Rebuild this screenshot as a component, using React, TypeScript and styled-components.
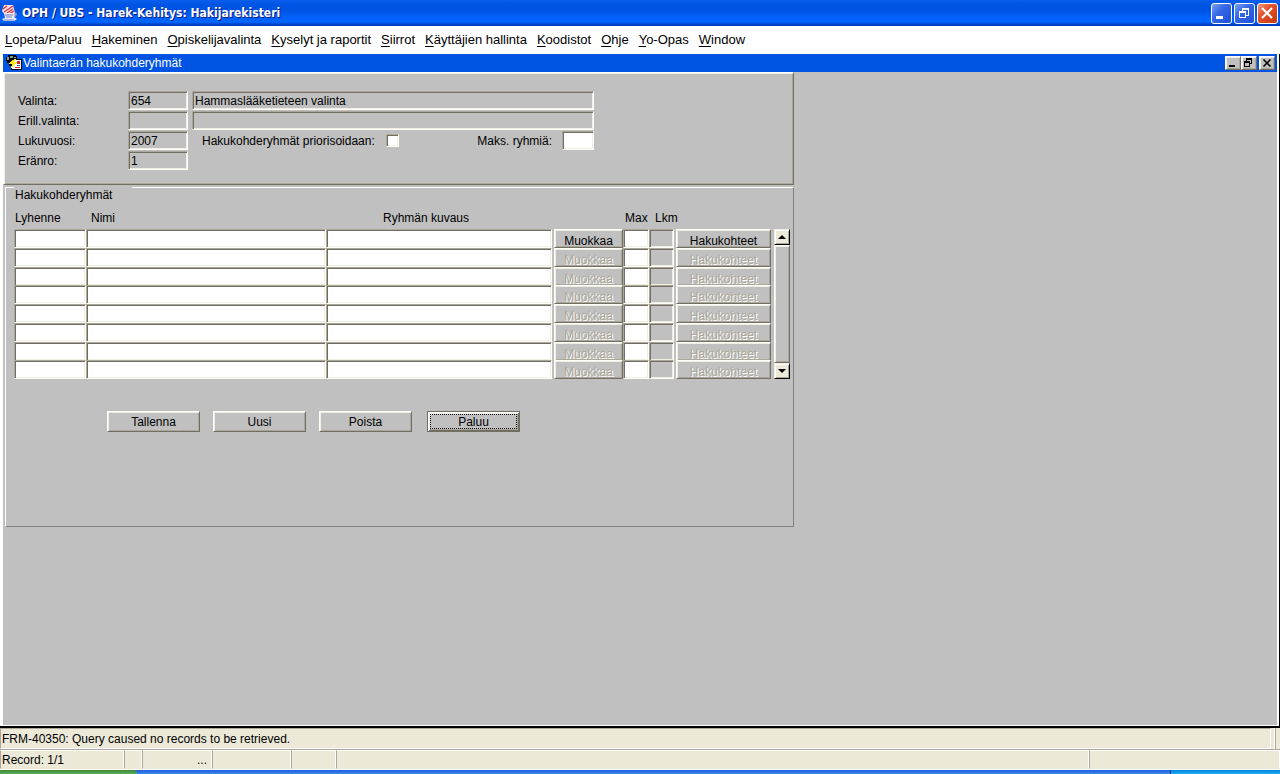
import React from 'react';
import styled, { createGlobalStyle, css } from 'styled-components';

const Global = createGlobalStyle`
  * { box-sizing: border-box; }
  body { margin: 0; background: #fff; }
  body, button, input, table { font-family: "Liberation Sans", Arial, sans-serif; font-size: 12px; line-height: 16px; color: #000; }
`;

const Page = styled.div`
  display: flex;
  flex-direction: column;
  min-height: 100vh;
`;

const sunken = css`
  border: 1px solid;
  border-color: #aca899 #fff #fff #aca899;
  box-shadow: inset 1px 1px #716f64, inset -1px -1px #f1efe2;
`;

const raised = css`
  border: 1px solid;
  border-color: #fff #716f64 #716f64 #fff;
  box-shadow: inset 1px 1px #f1efe2, inset -1px -1px #aca899;
`;

const TitleBar = styled.header`
  display: flex;
  align-items: center;
  height: 26px;
  padding: 0 2px 0 1px;
  gap: 4px;
  background: linear-gradient(#0a5fee 0, #0055e5 4px, #0053e1 10px, #0060fb 17px, #0066ff 22px, #0048d0 24px, #0037b8 26px);
`;

const WindowTitle = styled.h1`
  flex: 1;
  margin: 0;
  font: bold 12px/16px "DejaVu Sans Condensed", "Open Sans", sans-serif;
  color: #fff;
  text-shadow: 1px 1px #0a1883;
`;

const CaptionButtons = styled.div`
  display: flex;
  gap: 2px;
`;

const CaptionButton = styled.button<{ $close?: boolean }>`
  display: block;
  width: 21px;
  height: 21px;
  padding: 0;
  border: 1px solid #fff;
  border-radius: 3px;
  background: ${(p) => (p.$close
    ? 'linear-gradient(135deg, #f0987c, #e2502b 40%, #c83a10)'
    : 'linear-gradient(135deg, #7ba0f3, #3568e6 40%, #1d50da)')};
  svg { display: block; }
`;

const MenuBar = styled.nav`
  display: flex;
  height: 28px;
  padding: 6px 5px 0;
  gap: 10px;
  font-size: 13px;
  background: #fff;
`;

const MenuLink = styled.a`
  color: #000;
  text-decoration: none;
  white-space: nowrap;
  u { text-underline-offset: 2px; }
`;

const Mdi = styled.main`
  flex: 1;
  display: flex;
  flex-direction: column;
  padding-left: 3px;
  border-right: 1px solid #000;
  border-bottom: 2px solid #000;
`;

const Child = styled.section`
  flex: 1;
  display: flex;
  flex-direction: column;
  background: #c0c0c0;
  border-right: 2px solid #fff;
  border-bottom: 1px solid #fff;
`;

const ChildTitleBar = styled.div`
  display: flex;
  align-items: center;
  height: 18px;
  padding: 0 2px 0 3px;
  gap: 1px;
  background: #0054e3;
`;

const ChildTitle = styled.h2`
  flex: 1;
  margin: 0;
  font-size: 12px;
  font-weight: normal;
  color: #fff;
`;

const ChildButtons = styled.div`
  display: flex;
  button:last-child { margin-left: 2px; }
`;

const ChildButton = styled.button`
  ${raised}
  width: 16px;
  height: 14px;
  padding: 0;
  background: #c0c0c0;
  svg { display: block; }
`;

const Form = styled.form`
  display: flex;
  flex-direction: column;
  width: 100%;
  max-width: 791px;
`;

const Panel = styled.div`
  ${raised}
  height: 113px;
  padding: 18px 0 0 14px;
`;

const FieldGrid = styled.div`
  display: grid;
  grid-template-columns: 106px 60px 402px;
  grid-auto-rows: 20px;
  column-gap: 4px;
  label { white-space: nowrap; line-height: 20px; }
`;

const Inline = styled.div`
  display: flex;
  padding-left: 10px;
  label:last-of-type { margin: 0 10px 0 auto; }
`;

const TextField = styled.input<{ $editable?: boolean }>`
  ${sunken}
  width: ${(p) => (p.$editable ? '32px' : '100%')};
  height: 19px;
  padding: 0 2px;
  border-radius: 0;
  background: ${(p) => (p.$editable ? '#fff' : '#c0c0c0')};
  outline: none;
`;

const Tick = styled.input`
  ${sunken}
  appearance: none;
  width: 13px;
  height: 13px;
  margin: 3px 0 0 11px;
  background: #fff;
`;

const Group = styled.fieldset`
  height: 355px;
  margin: -13px 0 0 2px;
  padding: 5px 0 0 8px;
  min-width: 0;
  border: 1px solid;
  border-color: #fff #808080 #808080 #fff;
`;

const Legend = styled.legend`
  height: 30px;
  width: 118px;
  padding: 16px 0 0 1px;
  line-height: 14px;
`;

const GridArea = styled.div`
  display: flex;
  align-items: flex-end;
  gap: 3px;
`;

const Records = styled.table`
  width: 757px;
  height: 172px;
  table-layout: fixed;
  border-collapse: collapse;
  td { padding: 0; vertical-align: top; }
`;

const HeadCell = styled.th<{ $indent: number }>`
  padding: 3px 0 3px ${(p) => p.$indent}px;
  height: 22px;
  font-weight: normal;
  text-align: left;
  white-space: nowrap;
`;

const Cell = styled.input<{ $readOnly?: boolean }>`
  ${sunken}
  display: block;
  width: 100%;
  height: 19px;
  margin: 0 0 -1px;
  padding: 0 2px;
  border-radius: 0;
  background: ${(p) => (p.$readOnly ? '#c0c0c0' : '#fff')};
  outline: none;
`;

const RowButton = styled.button`
  ${raised}
  display: block;
  width: calc(100% - 2px);
  height: 19px;
  margin: 0 0 -1px 2px;
  padding: 4px 0 0;
  line-height: 14px;
  overflow: hidden;
  background: #c0c0c0;
  &:disabled { color: #aca899; text-shadow: 1px 1px #fff; }
`;

const ScrollBar = styled.div`
  display: flex;
  flex-direction: column;
  width: 16px;
  height: 150px;
`;

const ScrollButton = styled.button`
  width: 16px;
  height: 16px;
  padding: 0;
  border: 1px solid;
  border-color: #f1efe2 #000 #000 #f1efe2;
  box-shadow: inset 1px 1px #fff, inset -1px -1px #aca899;
  background: #ece9d8;
  svg { display: block; }
`;

const Thumb = styled.div`
  ${raised}
  flex: 1;
  background: #c0c0c0;
`;

const Actions = styled.div`
  display: flex;
  gap: 13px;
  margin: 32px 0 0 93px;
  button:last-child { margin-left: 2px; }
`;

const ActionButton = styled.button<{ $focused?: boolean }>`
  ${raised}
  width: 93px;
  height: 21px;
  padding: 2px 0 0;
  line-height: 15px;
  background: #c0c0c0;
  ${(p) => p.$focused && css`
    border-color: #716f64;
    box-shadow: inset 1px 1px #fff, inset -1px -1px #716f64, inset 2px 2px #f1efe2, inset -2px -2px #aca899;
    outline: 1px dotted #000;
    outline-offset: -4px;
  `}
`;

const StatusArea = styled.footer`
  background: #ece9d8;
  border-bottom: 1px solid #fff;
`;

const MessageRow = styled.div`
  display: flex;
  gap: 3px;
`;

const Message = styled.div`
  flex: 1;
  height: 21px;
  padding: 2px 1px 0;
  border: 1px solid;
  border-color: #aca899 #fff #fff #aca899;
`;

const Grip = styled.div`
  width: 6px;
  border-left: 1px solid #fff;
  box-shadow: inset 1px 0 #aca899;
`;

const StatusRow = styled.div`
  display: flex;
  height: 20px;
  border-top: 1px solid #aca899;
`;

const StatusCell = styled.div<{ $width?: number; $right?: boolean }>`
  ${(p) => (p.$width ? `flex: none; width: ${p.$width}px;` : 'flex: 1;')}
  padding: 1px 4px 0 1px;
  border: 1px solid;
  border-color: #fff #fff #ece9d8 #aca899;
  text-align: ${(p) => (p.$right ? 'right' : 'left')};
`;

const TaskBar = styled.div`
  display: flex;
  height: 4px;
  background: linear-gradient(#1f5fd6, #3b85ee);
`;

const StartEdge = styled.div`
  width: 137px;
  border-radius: 0 4px 0 0;
  background: linear-gradient(#3d8b3d, #5eac56);
`;

const TrayEdge = styled.div`
  width: 110px;
  margin-left: auto;
  border-left: 1px solid #0a3a8c;
  background: linear-gradient(#0c7fd8, #18b2f2);
`;

const JavaCup = () => (
  <svg width="17" height="18" viewBox="0 0 17 18" aria-hidden="true">
    <path d="M3 1h9l2 8-3 2H4L1 7z" fill="#fbe3e6" />
    <path d="M2 5l4-3M3 8l9-6M6 9l6-4M8 10l5-3" fill="none" stroke="#e0303c" strokeWidth="1.300" />
    <path d="M3 9h10c3-1 4 3 0 4l3 2-3 2H3l-2-2 3-1z" fill="#eeeef8" />
    <path d="M4 11h8M5 13h6M3 16h10M13 10h2v2h-2" fill="none" stroke="#7077b8" />
  </svg>
);

const FormsIcon = () => (
  <svg width="16" height="16" viewBox="0 0 16 16" shapeRendering="crispEdges" aria-hidden="true">
    <path d="M2 0h8v1h1v3h5v11H5v-4H3V8H1V6H0V2h2z" fill="#000" />
    <path d="M1 2h2v3H1zM4 1h3v2H4zM8 2h2v1H8z" fill="#7c9c98" />
    <path d="M6 5h9v9H6z" fill="#fff" />
    <path d="M11 6h3v3h-3z" fill="#d8202c" />
    <path d="M11 10h3v1h-3z" fill="#2350c8" />
    <path d="M9 12h5v1H9z" fill="#d8202c" />
    <path d="M8 4h2v1H9v1H8v1h3v1h-1v1H9v1H8v1H7v1H6v1H5v-2h1V9H3V8h1V7h1V6h1V5h2z" fill="#ffe820" />
  </svg>
);

const menu = ['Lopeta/Paluu', 'Hakeminen', 'Opiskelijavalinta', 'Kyselyt ja raportit', 'Siirrot', 'Käyttäjien hallinta', 'Koodistot', 'Ohje', 'Yo-Opas', 'Window'];

const columns = [
  { title: 'Lyhenne', width: 72, indent: 1 },
  { title: 'Nimi', width: 240, indent: 5 },
  { title: 'Ryhmän kuvaus', width: 226, indent: 57 },
  { title: '', width: 71, indent: 0 },
  { title: 'Max', width: 26, indent: 2 },
  { title: 'Lkm', width: 25, indent: 6 },
  { title: '', width: 97, indent: 0 },
];

const rows = [0, 1, 2, 3, 4, 5, 6, 7];

export default function App() {
  return (
    <Page>
      <Global />
      <TitleBar>
        <JavaCup />
        <WindowTitle>OPH / UBS - Harek-Kehitys: Hakijarekisteri</WindowTitle>
        <CaptionButtons>
          <CaptionButton aria-label="Minimize">
            <svg width="19" height="19"><path d="M4 12h7v3H4z" fill="#fff" /></svg>
          </CaptionButton>
          <CaptionButton aria-label="Restore">
            <svg width="19" height="19" fill="none" stroke="#fff" shapeRendering="crispEdges">
              <path d="M4.500 8.500h6v5h-6zM4 7.500h7M7.500 7V5.500h6v6H11M7 4.500h7" />
            </svg>
          </CaptionButton>
          <CaptionButton $close aria-label="Close">
            <svg width="19" height="19"><path d="M4 4l10 10M14 4L4 14" stroke="#fff" strokeWidth="2.200" /></svg>
          </CaptionButton>
        </CaptionButtons>
      </TitleBar>
      <MenuBar>
        {menu.map((m) => (
          <MenuLink href="#" key={m}><u>{m[0]}</u>{m.slice(1)}</MenuLink>
        ))}
      </MenuBar>
      <Mdi>
        <Child>
          <ChildTitleBar>
            <FormsIcon />
            <ChildTitle>Valintaerän hakukohderyhmät</ChildTitle>
            <ChildButtons>
              <ChildButton aria-label="Minimize form">
                <svg width="14" height="12"><path d="M3 8h6v2H3z" /></svg>
              </ChildButton>
              <ChildButton aria-label="Restore form">
                <svg width="14" height="12" fill="none" stroke="#000" shapeRendering="crispEdges">
                  <path d="M2.500 5.500h5v4h-5zM2 4.500h6M4.500 4V2.500h5v4H8M4 1.500h6" />
                </svg>
              </ChildButton>
              <ChildButton aria-label="Close form">
                <svg width="14" height="12"><path d="M3.500 2.500l7 7M10.500 2.500l-7 7" stroke="#000" strokeWidth="1.600" /></svg>
              </ChildButton>
            </ChildButtons>
          </ChildTitleBar>
          <Form onSubmit={(e) => e.preventDefault()}>
            <Panel>
              <FieldGrid>
                <label htmlFor="valinta">Valinta:</label>
                <TextField id="valinta" readOnly value="654" />
                <TextField aria-label="Valinnan nimi" readOnly value="Hammaslääketieteen valinta" />
                <label htmlFor="erill">Erill.valinta:</label>
                <TextField id="erill" readOnly value="" />
                <TextField aria-label="Erillisvalinnan nimi" readOnly value="" />
                <label htmlFor="lukuvuosi">Lukuvuosi:</label>
                <TextField id="lukuvuosi" readOnly value="2007" />
                <Inline>
                  <label htmlFor="prio">Hakukohderyhmät priorisoidaan:</label>
                  <Tick id="prio" type="checkbox" />
                  <label htmlFor="maks">Maks. ryhmiä:</label>
                  <TextField id="maks" $editable />
                </Inline>
                <label htmlFor="eranro">Eränro:</label>
                <TextField id="eranro" readOnly value="1" />
              </FieldGrid>
            </Panel>
            <Group>
              <Legend>Hakukohderyhmät</Legend>
              <GridArea>
                <Records>
                  <colgroup>
                    {columns.map((c, i) => <col key={i} width={c.width} />)}
                  </colgroup>
                  <thead>
                    <tr>
                      {columns.map((c, i) => <HeadCell key={i} $indent={c.indent}>{c.title}</HeadCell>)}
                    </tr>
                  </thead>
                  <tbody>
                    {rows.map((r) => (
                      <tr key={r}>
                        <td><Cell aria-label="Lyhenne" /></td>
                        <td><Cell aria-label="Nimi" /></td>
                        <td><Cell aria-label="Ryhmän kuvaus" /></td>
                        <td><RowButton type="button" disabled={r > 0}>Muokkaa</RowButton></td>
                        <td><Cell aria-label="Max" /></td>
                        <td><Cell aria-label="Lkm" $readOnly readOnly /></td>
                        <td><RowButton type="button" disabled={r > 0}>Hakukohteet</RowButton></td>
                      </tr>
                    ))}
                  </tbody>
                </Records>
                <ScrollBar>
                  <ScrollButton type="button" aria-label="Scroll up">
                    <svg width="14" height="14"><path d="M3 9h8L7 5z" /></svg>
                  </ScrollButton>
                  <Thumb />
                  <ScrollButton type="button" aria-label="Scroll down">
                    <svg width="14" height="14"><path d="M3 5h8L7 9z" /></svg>
                  </ScrollButton>
                </ScrollBar>
              </GridArea>
              <Actions>
                <ActionButton type="button">Tallenna</ActionButton>
                <ActionButton type="button">Uusi</ActionButton>
                <ActionButton type="button">Poista</ActionButton>
                <ActionButton type="button" $focused>Paluu</ActionButton>
              </Actions>
            </Group>
          </Form>
        </Child>
      </Mdi>
      <StatusArea>
        <MessageRow>
          <Message>FRM-40350: Query caused no records to be retrieved.</Message>
          <Grip />
        </MessageRow>
        <StatusRow>
          <StatusCell $width={124}>Record: 1/1</StatusCell>
          <StatusCell $width={18} />
          <StatusCell $width={70} $right>...</StatusCell>
          <StatusCell $width={79} />
          <StatusCell $width={45} />
          <StatusCell />
          <StatusCell $width={191} />
        </StatusRow>
      </StatusArea>
      <TaskBar>
        <StartEdge />
        <TrayEdge />
      </TaskBar>
    </Page>
  );
}
